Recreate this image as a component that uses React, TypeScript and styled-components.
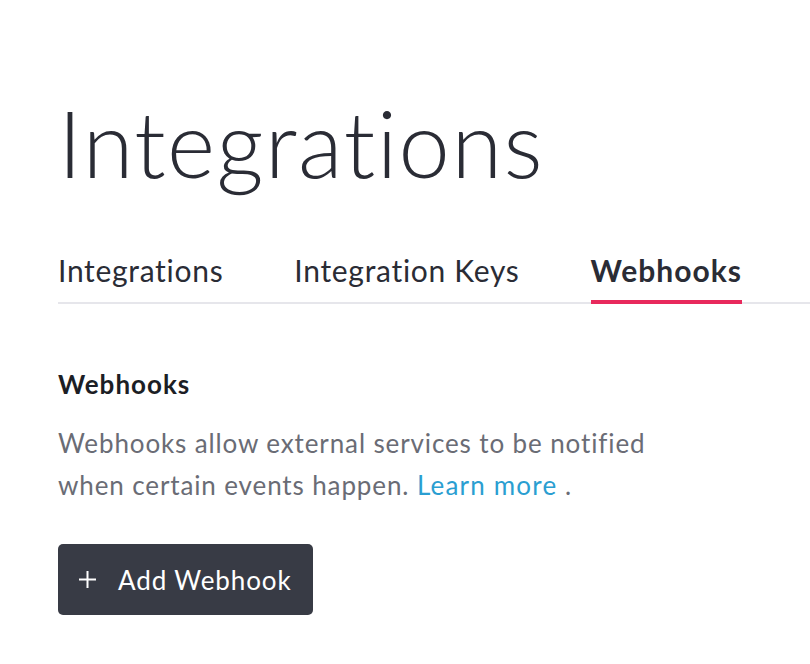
import React from "react";
import styled, { createGlobalStyle } from "styled-components";

const Global = createGlobalStyle`
  html, body { margin: 0; padding: 0; background: #ffffff; }
  body { font-family: Lato, "Open Sans", sans-serif; color: #2a2c35; }
  * { box-sizing: border-box; }
`;

const Page = styled.main`
  padding: 78px 0 0 58px;
  width: 810px;
  overflow: hidden;
`;

const Title = styled.h1`
  margin: 0;
  font-weight: 300;
  font-size: 92px;
  line-height: 130px;
  color: #2a2c35;
  letter-spacing: 1.5px;
`;

const Tabs = styled.nav`
  margin-top: 32px;
  display: flex;
  gap: 71px;
  height: 64px;
  box-shadow: inset 0 -2px 0 #e6e6eb;
`;

const Tab = styled.a<{ $active?: boolean }>`
  display: block;
  height: 64px;
  padding-top: 11px;
  font-size: 30px;
  line-height: 38px;
  color: #2a2c35;
  font-weight: ${(p) => (p.$active ? 700 : 400)};
  letter-spacing: ${(p) => (p.$active ? "1px" : "0.7px")};
  text-decoration: none;
  white-space: nowrap;
  border-bottom: 4px solid ${(p) => (p.$active ? "#e8295c" : "transparent")};
`;

const Section = styled.section`
  padding-top: 65px;
  width: 620px;
`;

const SectionTitle = styled.h2`
  margin: 0;
  font-size: 26px;
  line-height: 30px;
  font-weight: 700;
  letter-spacing: 1px;
  color: #1c1e25;
`;

const Text = styled.p`
  margin: 23px 0 0;
  font-size: 26px;
  line-height: 42px;
  letter-spacing: 0.88px;
  color: #6a6c75;
`;

const Link = styled.a`
  color: #2a9ed1;
  letter-spacing: 1.2px;
  text-decoration: none;
`;

const Button = styled.button`
  margin-top: 38px;
  display: flex;
  align-items: center;
  gap: 21px;
  height: 71px;
  padding: 0 21px 0 20px;
  background: #383b45;
  border: none;
  border-radius: 5px;
  color: #ffffff;
  font-family: Lato, "Open Sans", sans-serif;
  font-size: 26px;
  letter-spacing: 0.9px;
`;

const PlusIcon = () => (
  <svg width="19" height="19" viewBox="0 0 19 19" aria-hidden="true">
    <path d="M9.5 1v17M1 9.5h17" stroke="#ffffff" strokeWidth="2" />
  </svg>
);

export default function App() {
  return (
    <>
      <Global />
      <Page>
        <Title>Integrations</Title>
        <Tabs>
          <Tab>Integrations</Tab>
          <Tab>Integration Keys</Tab>
          <Tab $active>Webhooks</Tab>
        </Tabs>
        <Section>
          <SectionTitle>Webhooks</SectionTitle>
          <Text>
            Webhooks allow external services to be notified when certain events happen.{" "}
            <Link href="#">Learn more</Link> .
          </Text>
          <Button>
            <PlusIcon />
            Add Webhook
          </Button>
        </Section>
      </Page>
    </>
  );
}
